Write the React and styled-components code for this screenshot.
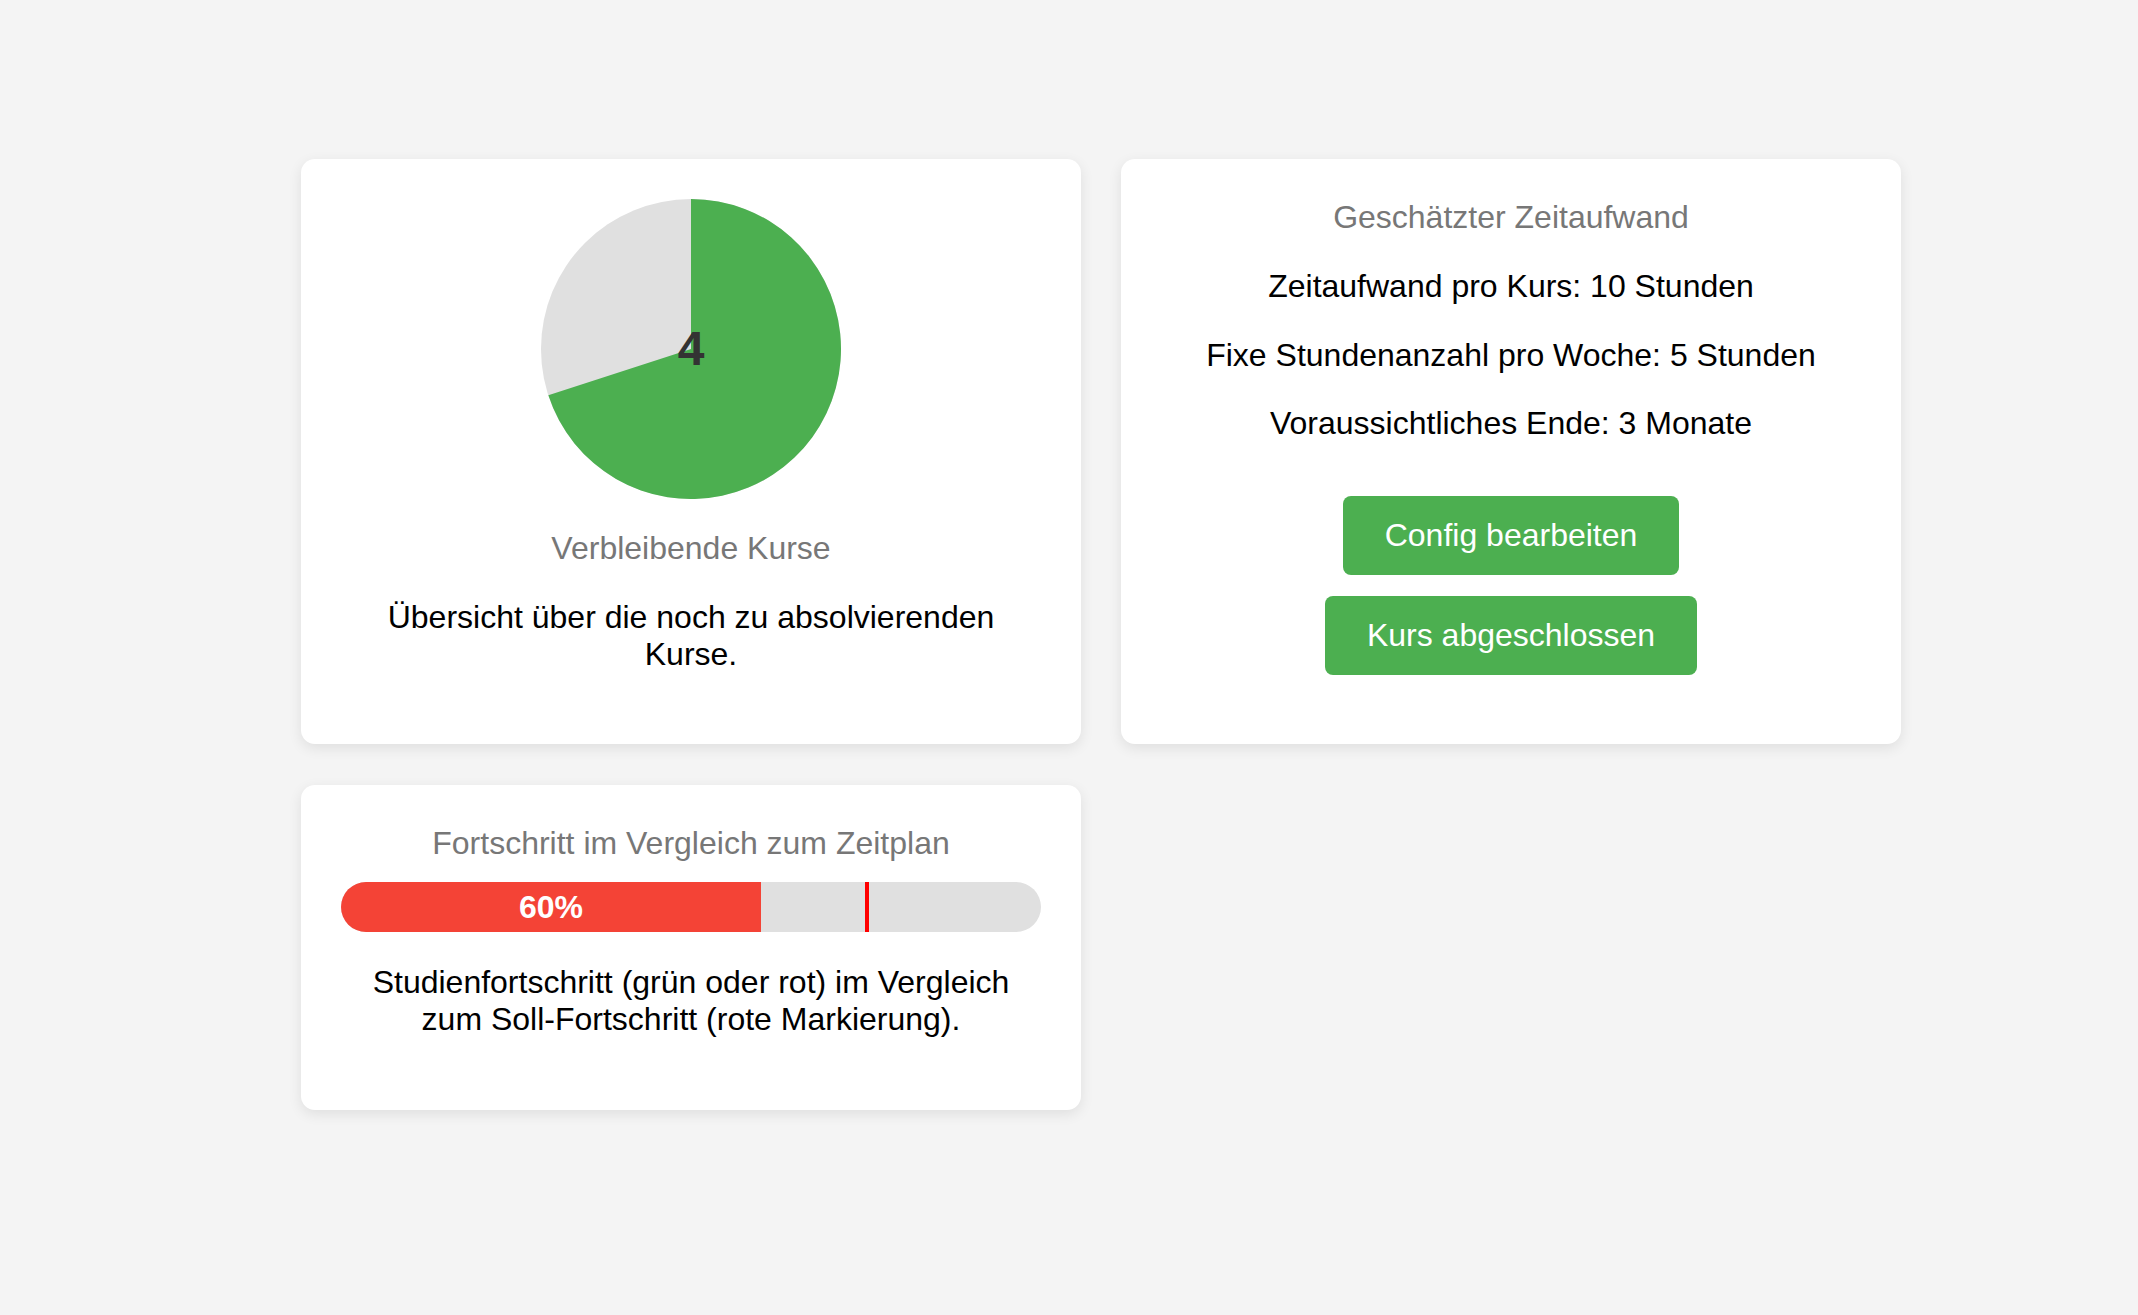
import React from 'react';
import styled, { createGlobalStyle } from 'styled-components';

const GlobalStyle = createGlobalStyle`
  body {
    margin: 0;
    background: #f4f4f4;
    font-family: "Liberation Sans", Arial, sans-serif;
  }
`;

const Page = styled.div`
  padding: 159px 0 80px 301px;
`;

const Grid = styled.div`
  display: grid;
  grid-template-columns: repeat(2, 780px);
  gap: 41px 40px;
`;

const Card = styled.div`
  box-sizing: border-box;
  background: #fff;
  border-radius: 14px;
  padding: 40px;
  text-align: center;
  box-shadow: 0 4px 14px rgba(0, 0, 0, 0.09);
  display: flow-root;
`;

const Title = styled.h3`
  margin: ${(p) => p.$top || 0}px 0 ${(p) => p.$bottom || 0}px;
  font-size: 32px;
  line-height: 1.15;
  font-weight: normal;
  color: #777;
`;

const Text = styled.p`
  margin: 32px 0;
  font-size: 32px;
  line-height: 1.15;
  color: #000;
`;

const PieWrap = styled.div`
  position: relative;
  width: 300px;
  height: 300px;
  margin: 0 auto;
`;

const PieLabel = styled.span`
  position: absolute;
  left: 0;
  right: 0;
  top: 50%;
  transform: translateY(-50%);
  font-size: 48px;
  font-weight: bold;
  color: #333;
  line-height: 1;
`;

const ButtonStack = styled.div`
  margin-top: 54px;
  display: flex;
  flex-direction: column;
  align-items: center;
  gap: 21px;
`;

const Button = styled.button`
  border: none;
  border-radius: 8px;
  background: #4caf50;
  color: #fff;
  font-family: inherit;
  font-size: 32px;
  line-height: 1.15;
  padding: 21px 42px;
  cursor: pointer;
`;

const Bar = styled.div`
  position: relative;
  height: 50px;
  border-radius: 25px;
  background: #e0e0e0;
  overflow: hidden;
`;

const Fill = styled.div`
  height: 100%;
  background: ${(p) => (p.$ahead ? '#4caf50' : '#f44336')};
  display: flex;
  align-items: center;
  justify-content: center;
  color: #fff;
  font-size: 32px;
  font-weight: bold;
`;

const Marker = styled.div`
  position: absolute;
  top: 0;
  bottom: 0;
  width: 4px;
  background: #ff0000;
`;

function Pie({ share, label }) {
  const r = 150;
  const a = share * 2 * Math.PI;
  const x = r + r * Math.sin(a);
  const y = r - r * Math.cos(a);
  const large = share > 0.5 ? 1 : 0;
  return (
    <PieWrap>
      <svg width="300" height="300" viewBox="0 0 300 300">
        <circle cx="150" cy="150" r="150" fill="#e0e0e0" />
        <path d={`M150,150 L150,0 A150,150 0 ${large} 1 ${x},${y} Z`} fill="#4caf50" />
      </svg>
      <PieLabel>{label}</PieLabel>
    </PieWrap>
  );
}

export default function App() {
  const progress = 60;
  const target = 75;
  return (
    <Page>
      <GlobalStyle />
      <Grid>
        <Card>
          <Pie share={0.7} label="4" />
          <Title $top={31}>Verbleibende Kurse</Title>
          <Text>Übersicht über die noch zu absolvierenden Kurse.</Text>
        </Card>
        <Card>
          <Title $bottom={32}>Geschätzter Zeitaufwand</Title>
          <Text>Zeitaufwand pro Kurs: 10 Stunden</Text>
          <Text>Fixe Stundenanzahl pro Woche: 5 Stunden</Text>
          <Text>Voraussichtliches Ende: 3 Monate</Text>
          <ButtonStack>
            <Button>Config bearbeiten</Button>
            <Button>Kurs abgeschlossen</Button>
          </ButtonStack>
        </Card>
        <Card>
          <Title $bottom={20}>Fortschritt im Vergleich zum Zeitplan</Title>
          <Bar>
            <Fill $ahead={progress >= target} style={{ width: `${progress}%` }}>
              {progress}%
            </Fill>
            <Marker style={{ left: `calc(${target}% - 1px)` }} />
          </Bar>
          <Text>Studienfortschritt (grün oder rot) im Vergleich zum Soll-Fortschritt (rote Markierung).</Text>
        </Card>
      </Grid>
    </Page>
  );
}
